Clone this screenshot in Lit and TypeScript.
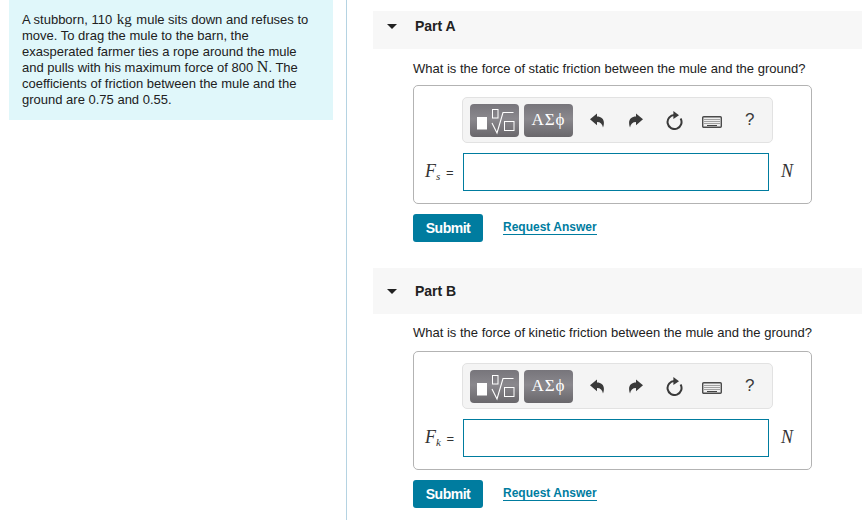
import { LitElement, html, css, svg } from 'lit';
import { customElement, property } from 'lit/decorators.js';

const SANS = css`'Liberation Sans', Arial, sans-serif`;

const undoIcon = svg`<path d="M0 6.2 L7 0.4 V3.6 C12.4 3.6 15.6 7.6 13 14.6 C12.4 11 10.4 9 7 9 V12.2 Z" fill="#3a3a3a"/>`;

@customElement('answer-part')
export class AnswerPart extends LitElement {
  @property() label = '';
  @property() question = '';
  @property() sub = '';

  static override styles = css`
    :host {
      display: block;
      font-family: ${SANS};
    }

    .header {
      display: flex;
      align-items: center;
      height: 46px;
      box-sizing: border-box;
      background: #f7f7f7;
      padding-left: 14px;
      font-size: 14px;
      font-weight: 700;
      color: #212121;
    }

    /* first header is cut off at the top of the scroll area */
    :host([first]) .header {
      height: 38px;
      padding-bottom: 8px;
    }

    .caret {
      width: 0;
      height: 0;
      border-left: 5px solid transparent;
      border-right: 5px solid transparent;
      border-top: 5px solid #212121;
      margin-right: 18px;
    }

    .body {
      padding: 11px 50px 0 40px;
    }

    :host([first]) .body {
      padding-top: 12px;
    }

    .question {
      font-size: 13px;
      line-height: 16px;
      color: #212121;
      margin: 0 0 10px;
    }

    :host([first]) .question {
      margin-bottom: 8px;
    }

    .box {
      width: 399px;
      height: 119px;
      box-sizing: border-box;
      border: 1px solid #b3b3b3;
      border-radius: 5px;
      padding-top: 11px;
    }

    .toolbar {
      display: flex;
      align-items: center;
      box-sizing: border-box;
      width: 311px;
      height: 46px;
      margin-left: 48px;
      padding-left: 7px;
      background: #f4f4f4;
      border: 1px solid #e2e2e2;
      border-radius: 5px;
    }

    .tool {
      display: flex;
      align-items: center;
      justify-content: center;
      box-sizing: border-box;
      width: 49px;
      height: 33px;
      border-radius: 4px;
      background: linear-gradient(#77757b, #8a888d 45%, #69676b);
    }

    .tool + .tool {
      margin-left: 5px;
    }

    .tool svg {
      display: block;
    }

    .greek {
      font-family: 'Liberation Serif', serif;
      font-size: 17px;
      color: #fff;
      letter-spacing: 1px;
    }

    .icons {
      display: flex;
      align-items: center;
    }

    .icons > svg {
      display: block;
    }

    .help {
      font-size: 17px;
      color: #3a3a3a;
      margin-left: 23px;
    }

    .entry {
      display: flex;
      align-items: center;
      margin-top: 10px;
    }

    .var {
      width: 49px;
      box-sizing: border-box;
      padding-left: 11px;
      margin-bottom: 2px;
      font-family: 'Liberation Serif', serif;
      font-size: 18px;
      font-style: italic;
      color: #333;
      white-space: nowrap;
    }

    .var sub {
      font-size: 11px;
      line-height: 0;
      vertical-align: -3px;
    }

    .var .eq {
      font-family: ${SANS};
      font-style: normal;
      font-size: 13px;
      margin-left: 2px;
    }

    .input {
      width: 306px;
      height: 38px;
      box-sizing: border-box;
      border: 1px solid #007c9f;
      background: #fff;
    }

    .unit {
      margin: 0 0 2px 12px;
      font-family: 'Liberation Serif', serif;
      font-size: 18px;
      font-style: italic;
      color: #333;
    }

    .actions {
      display: flex;
      align-items: center;
      margin-top: 10px;
    }

    .submit {
      width: 70px;
      height: 28px;
      display: flex;
      align-items: center;
      justify-content: center;
      background: #007c9f;
      border-radius: 3px;
      color: #fff;
      font-size: 14px;
      font-weight: 700;
      letter-spacing: -0.5px;
    }

    .link {
      margin-left: 20px;
      margin-bottom: 2px;
      font-size: 12px;
      font-weight: 700;
      color: #007c9f;
      border-bottom: 1px solid #007c9f;
      line-height: 14px;
    }
  `;

  override render() {
    return html`
      <div class="header"><span class="caret"></span>${this.label}</div>
      <div class="body">
        <p class="question">${this.question}</p>
        <div class="box">
          <div class="toolbar">
            <div class="tool">
              <svg width="49" height="33" viewBox="0 0 49 33" fill="none">
                <rect x="7" y="13" width="10" height="12.5" fill="#fff" />
                <rect x="22.5" y="5.5" width="5.5" height="8.5" stroke="#fff" />
                <path d="M22 19 L27 29 L33 8.5 H43.5" stroke="#fff" stroke-width="1.1" />
                <rect x="34.5" y="17.5" width="9.5" height="9" stroke="#fff" />
              </svg>
            </div>
            <div class="tool"><span class="greek">ΑΣϕ</span></div>
            <div class="icons">
              <svg style="margin-left:17px" width="15" height="15" viewBox="0 0 15 15">${undoIcon}</svg>
              <svg style="margin-left:23px;transform:scaleX(-1)" width="15" height="15" viewBox="0 0 15 15">${undoIcon}</svg>
              <svg style="margin-left:23px" width="17" height="19" viewBox="0 0 17 19" fill="none">
                <path d="M14.6 7.5 A7 7 0 1 1 8.5 4" stroke="#3a3a3a" stroke-width="2" />
                <path d="M7.4 0 L13 4.2 L7.4 8 Z" fill="#3a3a3a" />
              </svg>
              <svg style="margin:4px 0 0 19px" width="20" height="12" viewBox="0 0 20 12">
                <rect x="0.7" y="0.7" width="18.6" height="10.6" rx="1" fill="#eeeeee" stroke="#4a4a4a" stroke-width="1.4" />
                <path d="M2.5 3.5 H17.5 M2.5 5.5 H17.5 M2.5 7.5 H17.5" stroke="#555" stroke-dasharray="1 1" />
                <path d="M5 9.5 H15" stroke="#444" />
              </svg>
              <span class="help">?</span>
            </div>
          </div>
          <div class="entry">
            <span class="var">F<sub>${this.sub}</sub><span class="eq"> =</span></span>
            <div class="input"></div>
            <span class="unit">N</span>
          </div>
        </div>
        <div class="actions">
          <div class="submit">Submit</div>
          <span class="link">Request Answer</span>
        </div>
      </div>
    `;
  }
}

@customElement('app-root')
export class AppRoot extends LitElement {
  static override styles = css`
    :host {
      display: flex;
      width: 862px;
      height: 520px;
      overflow: hidden;
      background: #fff;
      font-family: ${SANS};
    }

    .side {
      width: 347px;
      box-sizing: border-box;
      padding-left: 9px;
      border-right: 1px solid #b5d3e2;
      flex: none;
    }

    .problem {
      width: 324px;
      height: 120px;
      box-sizing: border-box;
      padding: 12px 13px 0;
      background: #e0f7fa;
      font-size: 13px;
      line-height: 16px;
      color: #212121;
    }

    .unit {
      font-family: 'Liberation Serif', serif;
      font-size: 16px;
      line-height: 0;
    }

    .kg {
      font-size: 15px;
      margin: 0 1px;
    }

    .main {
      flex: 1;
      padding: 11px 0 0 26px;
    }

    answer-part + answer-part {
      margin-top: 26px;
    }
  `;

  override render() {
    return html`
      <div class="side">
        <div class="problem">
          A stubborn, 110 <span class="unit kg">kg</span> mule sits down and refuses to move. To drag the
          mule to the barn, the exasperated farmer ties a rope around the mule and pulls with his
          maximum force of 800 <span class="unit">N</span>. The coefficients of friction between the
          mule and the ground are 0.75 and 0.55.
        </div>
      </div>
      <div class="main">
        <answer-part
          first
          label="Part A"
          sub="s"
          question="What is the force of static friction between the mule and the ground?"
        ></answer-part>
        <answer-part
          label="Part B"
          sub="k"
          question="What is the force of kinetic friction between the mule and the ground?"
        ></answer-part>
      </div>
    `;
  }
}
